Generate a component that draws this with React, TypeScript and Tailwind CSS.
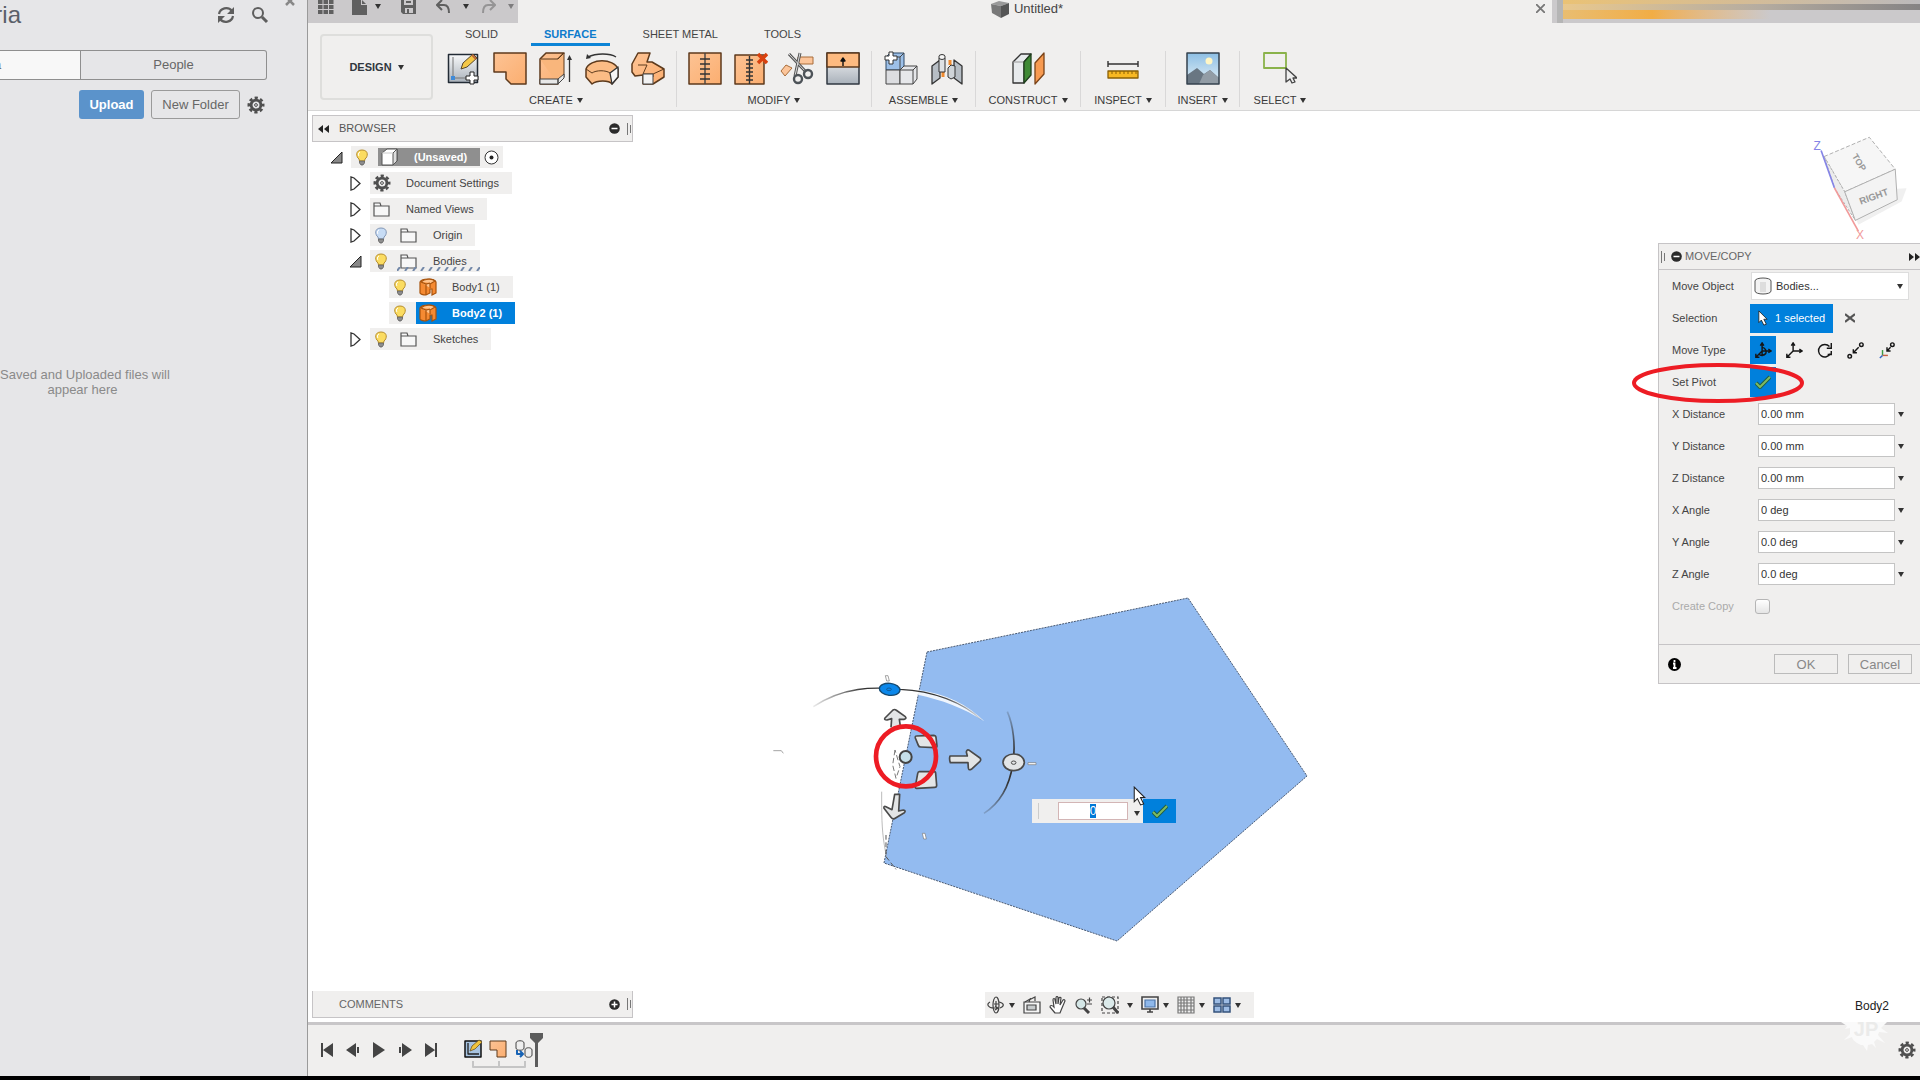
import { useEffect, useRef } from "react";
import type { ReactNode } from "react";
import { clsx } from "clsx";

const Caret = ({ className = "" }: { className?: string }) => (
  <svg viewBox="0 0 6 5" className={clsx("h-[5px] w-[6px] shrink-0 fill-[#333]", className)}>
    <path d="M0 0h6L3 5z" />
  </svg>
);

const Gear = () => (
  <svg viewBox="0 0 18 18" className="size-[18px] shrink-0" fill="none" stroke="#4f4f4f">
    <circle cx="9" cy="9" r="7.2" strokeWidth="2.6" strokeDasharray="3.2 2.455" strokeDashoffset="1.6" />
    <circle cx="9" cy="9" r="4.9" strokeWidth="2.8" />
    <circle cx="9" cy="9" r="1.4" strokeWidth="1" />
  </svg>
);

const Gradients = () => (
  <svg className="absolute size-0" aria-hidden="true">
    <defs>
      <linearGradient id="peach" x1="0" y1="0" x2="1" y2="1">
        <stop offset="0" stopColor="#fdc394" />
        <stop offset="1" stopColor="#fbae70" />
      </linearGradient>
      <linearGradient id="steel" x1="0" y1="0" x2="0" y2="1">
        <stop offset="0" stopColor="#f8f9fa" />
        <stop offset="1" stopColor="#a9b1ba" />
      </linearGradient>
      <linearGradient id="sky" x1="0" y1="0" x2="0" y2="1">
        <stop offset="0" stopColor="#8dbfe4" />
        <stop offset="1" stopColor="#e4f0f6" />
      </linearGradient>
      <linearGradient id="arcFade" x1="0" y1="0" x2="1" y2="0">
        <stop offset="0" stopColor="#333" stopOpacity="0.1" />
        <stop offset="0.3" stopColor="#333" />
        <stop offset="0.75" stopColor="#333" />
        <stop offset="1" stopColor="#333" stopOpacity="0.1" />
      </linearGradient>
      <linearGradient id="arcFadeDown" x1="0" y1="0" x2="0" y2="1">
        <stop offset="0" stopColor="#333" stopOpacity="0.2" />
        <stop offset="0.4" stopColor="#333" />
        <stop offset="0.7" stopColor="#333" />
        <stop offset="1" stopColor="#333" stopOpacity="0.2" />
      </linearGradient>
    </defs>
  </svg>
);

const ToolSvg = ({ children }: { children: ReactNode }) => (
  <svg viewBox="0 0 34 34" className="size-[34px]" strokeLinejoin="round">
    {children}
  </svg>
);

const brown = "#5d3a1c";

const SketchIcon = () => (
  <ToolSvg>
    <rect x="1.5" y="3.5" width="29" height="28" fill="url(#steel)" stroke="#222b35" strokeWidth="1.5" />
    <path d="M6 6v21h18" fill="none" stroke="#777" />
    <rect x="4" y="25" width="4" height="4" fill="#3f8ad8" />
    <path d="M14 18l2-6L26 3l4 4-10 9z" fill="#f4c746" stroke="#57462a" />
    <path d="M25 4l4 4" stroke="#b9683c" strokeWidth="2" />
    <path d="M23 21h4v4h4v4h-4v4h-4v-4h-4v-4h4z" fill="#fff" stroke="#222" />
  </ToolSvg>
);

const PatchIcon = () => (
  <ToolSvg>
    <path d="M1 2h32v31H18l-5-5v-7H1z" fill="url(#peach)" stroke={brown} strokeWidth="1.5" />
  </ToolSvg>
);

const ExtrudeIcon = () => (
  <ToolSvg>
    <path d="M1 8l6-6h18l-6 6v25H1z" fill="url(#peach)" stroke={brown} strokeWidth="1.5" />
    <path d="M1 8h18l6-6v24l-6 7" fill="#f9b67c" stroke={brown} />
    <path d="M1 28h18v5H1zM19 28l6-5v4l-6 6z" fill="#e8e8e8" stroke="#444" />
    <path d="M30.500 31V8" stroke="#333" strokeWidth="1.3" />
    <path d="M28 9h5l-2.500-5z" fill="#333" />
  </ToolSvg>
);

const RevolveIcon = () => (
  <ToolSvg>
    <path d="M3 6c8-4 22-4 28 0" fill="none" stroke="#333" strokeWidth="1.4" />
    <path d="M1 8l1-5 4 4z" fill="#333" />
    <path d="M1 18c4-11 28-11 32 0v8l-6 7c-3-4-15-4-20 0l-6-7z" fill="#fbbc85" stroke={brown} strokeWidth="1.5" />
    <path d="M1 18l6 4c4-3 14-3 18 0l8-5" fill="none" stroke={brown} />
    <path d="M25 22l8-6v10l-6 7z" fill="#f5f5f5" stroke="#333" strokeWidth="1.3" />
  </ToolSvg>
);

const SweepIcon = () => (
  <ToolSvg>
    <path d="M1 13L7 2h12l-3 9h5l12 7v8l-11 7H12v-9l-8 1-3-4z" fill="url(#peach)" stroke={brown} strokeWidth="1.5" />
    <path d="M7 14h9l-4 9h10l11-5M22 23v3" fill="none" stroke={brown} />
    <rect x="12" y="23" width="10" height="10" fill="#f2f2f2" stroke="#444" />
  </ToolSvg>
);

const StitchIcon = () => (
  <ToolSvg>
    <rect x="1" y="2" width="32" height="31" fill="url(#peach)" stroke={brown} strokeWidth="1.5" />
    <path d="M17 2v31" stroke="#444" strokeWidth="1.4" />
    <path d="M12 8h10M12 13h10M12 18h10M12 23h10M12 28h10" stroke="#333" strokeWidth="1.4" />
  </ToolSvg>
);

const UnstitchIcon = () => (
  <ToolSvg>
    <rect x="1" y="4" width="29" height="29" fill="url(#peach)" stroke={brown} strokeWidth="1.5" />
    <path d="M15.500 5v28M12 9h7M12 13h7M12 17h7M12 21h7M12 25h7M12 29h7" stroke="#333" strokeWidth="1.4" />
    <path d="M24 3l9 9m0-9l-9 9" stroke="#d9420f" strokeWidth="3.500" />
  </ToolSvg>
);

const TrimIcon = () => (
  <ToolSvg>
    <path d="M18 6h15v7H18zM1 20l5-6 6 3-7 8z" fill="#fcc59a" stroke="#a86d3b" />
    <path d="M9 3l17 18M20 2l-5 23" stroke="#555" strokeWidth="3" />
    <path d="M9 3l17 18M20 2l-5 23" stroke="#ddd" />
    <circle cx="18" cy="28" r="4" fill="none" stroke="#4d5358" strokeWidth="2.400" />
    <circle cx="28" cy="23" r="4" fill="none" stroke="#4d5358" strokeWidth="2.400" />
  </ToolSvg>
);

const ExtendIcon = () => (
  <ToolSvg>
    <rect x="1" y="2" width="32" height="31" fill="url(#steel)" stroke="#303841" strokeWidth="1.5" />
    <path d="M1 2h32v14H1z" fill="#fdba80" stroke={brown} strokeWidth="1.5" />
    <path d="M17 15V8M15 10l2-3 2 3z" stroke="#111" fill="#111" strokeWidth="1.400" />
  </ToolSvg>
);

const ComponentIcon = () => (
  <ToolSvg>
    <path d="M2 6l4-4h14v13l-4 4H2z" fill="#9dc0e8" stroke="#2c4867" />
    <path d="M2 19h14v14H2z" fill="#dcdde0" stroke="#444" />
    <path d="M16 19l4-4h13v13l-4 5H16z" fill="#e6e7ea" stroke="#444" />
    <path d="M16 19h13v14M29 19l4-4M16 6v13M2 6h14l4-4" fill="none" stroke="#444" />
    <path d="M5 1h4v4h4v4H9v4H5V9H1V5h4z" fill="#fff" stroke="#333" />
  </ToolSvg>
);

const JointIcon = () => (
  <ToolSvg>
    <path d="M2 15l8-6v18l-8 6zM24 9l8 6v18l-8-6z" fill="#b7bec5" stroke="#333" strokeWidth="1.3" />
    <path d="M13 20v6M20 14V9" stroke="#f08b2f" strokeWidth="3" />
    <path d="M9 7v14h6V7z" fill="#dfe2e5" stroke="#333" />
    <ellipse cx="12" cy="6" rx="3.200" ry="2.500" fill="#f5f5f5" stroke="#333" />
    <path d="M18 17v9l3 2 4-2V15l-4-1z" fill="#cfd4d8" stroke="#333" />
  </ToolSvg>
);

const PlaneIcon = () => (
  <ToolSvg>
    <path d="M2 11l8-8h10l-7 8v21H2z" fill="#e7eaec" stroke="#333" strokeWidth="1.3" />
    <path d="M2 11h11" stroke="#999" />
    <path d="M13 11l7-8v21l-7 8z" fill="#3f8a35" stroke="#1f3f1d" strokeWidth="1.3" />
    <path d="M24 12l9-10v21l-9 10z" fill="#f79a50" stroke="#7a4318" strokeWidth="1.3" />
  </ToolSvg>
);

const MeasureIcon = () => (
  <ToolSvg>
    <path d="M2 10v6M32 10v6M2 13h30" stroke="#333" strokeWidth="1.4" />
    <rect x="2" y="20" width="30" height="7" fill="#f8b822" stroke="#8b6005" strokeWidth="1.3" />
    <path d="M6 20v3M10 20v3M14 20v3M18 20v3M22 20v3M26 20v3M30 20v3" stroke="#8b6005" />
  </ToolSvg>
);

const PictureIcon = () => (
  <ToolSvg>
    <rect x="1" y="2" width="32" height="31" fill="url(#sky)" />
    <circle cx="23" cy="10" r="3.500" fill="#fff6c4" />
    <path d="M1 24l10-7 7 6 6-4 9 8v6H1z" fill="#697682" />
    <path d="M13 33l4-9 7-5 9 8v6z" fill="#929ca5" />
    <rect x="1" y="2" width="32" height="31" fill="none" stroke="#34424e" strokeWidth="1.5" />
  </ToolSvg>
);

const SelectIcon = () => (
  <ToolSvg>
    <rect x="1" y="2" width="22" height="15" fill="none" stroke="#8ab24a" strokeWidth="1.8" />
    <path d="M23 17v14l4-3 2 4 3-1-2-4h4z" fill="#eee" stroke="#444" strokeWidth="1.3" />
  </ToolSvg>
);

const toolGroups = [
  { label: "CREATE", width: "w-[241px]", icons: [SketchIcon, PatchIcon, ExtrudeIcon, RevolveIcon, SweepIcon] },
  { label: "MODIFY", width: "w-[195px]", icons: [StitchIcon, UnstitchIcon, TrimIcon, ExtendIcon] },
  { label: "ASSEMBLE", width: "w-[104px]", icons: [ComponentIcon, JointIcon] },
  { label: "CONSTRUCT", width: "w-[105px]", icons: [PlaneIcon] },
  { label: "INSPECT", width: "w-[85px]", icons: [MeasureIcon] },
  { label: "INSERT", width: "w-[74px]", icons: [PictureIcon] },
  { label: "SELECT", width: "w-[80px]", icons: [SelectIcon] },
];

const tabs = ["SOLID", "SURFACE", "SHEET METAL", "TOOLS"];

const DataPanel = () => (
  <aside className="w-[308px] shrink-0 overflow-hidden border-r border-[#9a9a9a] bg-[#e6e6e8] text-[13px] text-[#666]">
    <div className="flex h-[50px] items-start">
      <h1 className="flex w-[21px] justify-end pt-[2px] text-2xl leading-[26px] text-[#5a6069]">ria</h1>
      <div className="flex flex-1 justify-end gap-4 pt-[6px]">
        <button aria-label="Refresh">
          <svg viewBox="0 0 18 18" className="size-[18px]" fill="none" stroke="#5e5e5e" strokeWidth="2.2">
            <path d="M2 8c1-6 9-8 13-3M16 10c-1 6-9 8-13 3" />
            <path d="M17 1v7h-7zM1 17v-7h7z" fill="#5e5e5e" stroke="none" />
          </svg>
        </button>
        <button aria-label="Search">
          <svg viewBox="0 0 18 18" className="size-[18px]" fill="none" stroke="#5e5e5e" strokeWidth="2">
            <circle cx="7" cy="7" r="5" />
            <path d="M11 11l5 5" strokeWidth="3" />
          </svg>
        </button>
      </div>
      <button aria-label="Close panel" className="ml-4 mr-3 -mt-1">
        <svg viewBox="0 0 10 10" className="size-[10px]" stroke="#888" strokeWidth="2.5">
          <path d="M1 1l8 8M9 1L1 9" />
        </svg>
      </button>
    </div>
    <div className="mr-10 flex h-[30px] overflow-hidden rounded-r-[3px] border border-l-0 border-[#8f8f8f]">
      <button className="flex w-20 items-center bg-[#f8f8f8]">
        <span className="-ml-[6px]">a</span>
      </button>
      <button className="flex-1 border-l border-[#8f8f8f]">People</button>
    </div>
    <div className="mr-[42px] mt-[10px] flex items-center justify-end gap-[7px]">
      <button className="h-[29px] w-[65px] rounded-[3px] bg-[#5b93cb] font-bold text-white">Upload</button>
      <button className="h-[29px] w-[89px] rounded-[3px] border border-[#9a9a9a]">New Folder</button>
      <button aria-label="Settings">
        <Gear />
      </button>
    </div>
    <p className="mt-[248px] w-[165px] text-center leading-[15px] whitespace-nowrap text-[#8a8a8a]">
      Saved and Uploaded files will
      <br />
      appear here
    </p>
  </aside>
);

const TitleBar = () => (
  <div className="flex h-[23px]">
    <div className="flex w-[210px] items-start bg-[#cbc9cb] pl-[10px] text-[#606060]">
      <button aria-label="Show data panel">
        <svg viewBox="0 0 16 14" className="h-[14px] w-4" fill="currentColor">
          {[0, 5, 10].map((y) => [0, 5.5, 11].map((x) => <rect key={`${x}-${y}`} x={x} y={y} width="4.5" height="4" />))}
        </svg>
      </button>
      <button aria-label="File" className="ml-[18px] flex gap-2">
        <svg viewBox="0 0 15 15" className="size-[15px]" fill="currentColor">
          <path d="M0 0h9v5h6v10H0zM10 0l4 4h-4z" />
        </svg>
        <Caret className="mt-1" />
      </button>
      <button aria-label="Save" className="ml-5">
        <svg viewBox="0 0 15 14" className="h-[14px] w-[15px]">
          <path d="M0 0h15v14H2l-2-2z" fill="#606060" />
          <path d="M3 0h9v5H3zM4 8h8v5H4z" fill="#cbc9cb" />
          <path d="M5 1h5v2H5zM6 9h2v4H6z" fill="#606060" />
        </svg>
      </button>
      <button aria-label="Undo" className="ml-5 flex gap-3">
        <svg viewBox="0 0 15 14" className="h-[14px] w-[15px]" fill="none" stroke="#606060" strokeWidth="2">
          <path d="M6 0L1 5l5 5M1 5h7c4 0 5 3 5 8" />
        </svg>
        <Caret className="mt-1" />
      </button>
      <button aria-label="Redo" className="ml-3 flex gap-3 opacity-50">
        <svg viewBox="0 0 15 14" className="h-[14px] w-[15px]" fill="none" stroke="#606060" strokeWidth="2">
          <path d="M9 0l5 5-5 5M14 5H7c-4 0-5 3-5 8" />
        </svg>
        <Caret className="mt-1" />
      </button>
    </div>
    <div className="flex h-[18px] flex-1 items-center justify-center gap-[5px] text-[13px] text-[#444]">
      <svg viewBox="0 0 18 17" className="h-[17px] w-[18px]">
        <path d="M0 3l8-3 10 2-8 3z" fill="#999" />
        <path d="M0 3l10 2v12l-9-5z" fill="#787878" />
        <path d="M10 5l8-3v11l-8 4z" fill="#555" />
      </svg>
      Untitled*
    </div>
    <button aria-label="Close document" className="mr-[7px] flex h-[17px] items-center">
      <svg viewBox="0 0 9 9" className="size-[9px]" stroke="#777" strokeWidth="1.8">
        <path d="M0 0l9 9M9 0L0 9" />
      </svg>
    </button>
    <div className="flex w-[368px] bg-[#cbc9cb] pl-[5px]">
      <div className="w-[6px] bg-[#b5b5b5]" />
      <div className="flex flex-1 flex-col">
        <div className="h-1 bg-linear-to-r from-[#eac275] via-[#d5bc95] via-50% to-[#bcbabc]" />
        <div className="h-[6px] bg-linear-to-r from-[#e9c88d] via-[#b5aca0] via-55% to-[#858384]" />
        <div className="h-[9px] bg-linear-to-r from-[#e9bd70] via-[#f1ad45] via-25% to-[#cbc9cb] to-58%" />
      </div>
    </div>
  </div>
);

const Ribbon = () => (
  <header className="shrink-0 border-b border-[#d6d6d6] bg-[#f0efee]">
    <TitleBar />
    <div className="flex h-[87px] pl-3">
      <button className="mt-[11px] flex h-[66px] w-[113px] shrink-0 items-center justify-center gap-[6px] rounded-[4px] border-2 border-[#dededc] font-bold text-[#2f363d]">
        DESIGN
        <Caret />
      </button>
      <div className="ml-[3px]">
        <div className="flex h-[23px] gap-5 pl-4">
          {tabs.map((tab) => (
            <button
              key={tab}
              className={clsx(
                "border-b-[3px] px-[13px] pt-[3px]",
                tab === "SURFACE" ? "border-[#0c84d6] font-bold text-[#0c7bcc]" : "border-transparent text-[#444]",
              )}
            >
              {tab}
            </button>
          ))}
        </div>
        <div className="mt-[5px] flex">
          {toolGroups.map(({ label, width, icons }) => (
            <div key={label} className={clsx("h-[56px] border-r border-[#d9d8d8] last:border-0", width)}>
              <div className="flex justify-center">
                {icons.map((Icon, i) => (
                  <button key={i} aria-label={`${label} ${i + 1}`} className="flex w-[46px] justify-center">
                    <Icon />
                  </button>
                ))}
              </div>
              <button className="mt-[7px] flex w-full items-center justify-center gap-1 leading-4 text-[#3a3a3a]">
                {label}
                <Caret />
              </button>
            </div>
          ))}
        </div>
      </div>
    </div>
  </header>
);

const PanelHandle = () => (
  <div className="flex h-3 items-center gap-[2px]">
    <i className="h-3 w-px bg-[#777]" />
    <i className="h-2 w-px bg-[#777]" />
  </div>
);

const RoundSign = ({ plus }: { plus?: boolean }) => (
  <svg viewBox="0 0 11 11" className="size-[11px]">
    <circle cx="5.500" cy="5.500" r="5.300" fill="#2b2b2b" />
    <path d={plus ? "M2.500 5.500h6M5.500 2.500v6" : "M2.500 5.500h6"} stroke="#fff" strokeWidth="1.5" />
  </svg>
);

const Bulb = ({ off }: { off?: boolean }) => (
  <span className="flex w-[27px] shrink-0 pl-1">
    <svg viewBox="0 0 14 17" className="h-[17px] w-[14px]">
      <path d="M7 1c-7 0-6 7-3 9l.5 2h5l.5-2c3-2 4-9-3-9z" fill={off ? "#c7dcf5" : "#fbdc61"} stroke={off ? "#8296b5" : "#b68d2c"} />
      <path d="M5 3c-2 1-2 3-1 4" fill="none" stroke="#fff" />
      <path d="M4.500 12h5v2l-1.500 2h-2l-1.500-2z" fill="#8d8d8d" stroke="#555" strokeWidth=".7" />
    </svg>
  </span>
);

const TreeIcon = ({ kind }: { kind: string }) => (
  <span className="flex w-9 shrink-0 pl-[3px]">
    {kind === "gear" && <Gear />}
    {kind === "folder" && (
      <svg viewBox="0 0 17 15" className="h-[15px] w-[17px]" fill="#f7f7f7" stroke="#555" strokeWidth="1.200">
        <path d="M1 14V1h6l1 3h8v10zM1 4h7" />
      </svg>
    )}
    {kind === "body" && (
      <svg viewBox="0 0 18 18" className="size-[18px]" stroke="#a8530c" strokeWidth="1.200">
        <path d="M1 4c2-4 14-4 16 0v11l-4 2v-6h-2v4l-4 2c-3 0-6-1-6-2z" fill="#f58a32" />
        <path d="M2 4c3-3 11-4 14-1l-5 3v4M2 4l5 2 4-1M7 6v11" fill="#ffc48c" />
      </svg>
    )}
    {kind === "cube" && (
      <svg viewBox="0 0 17 18" className="h-[18px] w-[17px]" stroke="#555" fill="#fff">
        <path d="M1 5l5-4h10v12l-4 4H1z" />
        <path d="M12 5l4-4v12l-4 4z" fill="#ddd" />
        <path d="M1 5h11" stroke="#ccc" />
      </svg>
    )}
  </span>
);

type Node = { label: string; indent: string; icon: string; bulb?: "on" | "off"; arrow?: "open" | "closed" };

const nodes: Node[] = [
  { label: "(Unsaved)", indent: "pl-[18px]", icon: "cube", bulb: "on", arrow: "open" },
  { label: "Document Settings", indent: "pl-[37px]", icon: "gear", arrow: "closed" },
  { label: "Named Views", indent: "pl-[37px]", icon: "folder", arrow: "closed" },
  { label: "Origin", indent: "pl-[37px]", icon: "folder", bulb: "off", arrow: "closed" },
  { label: "Bodies", indent: "pl-[37px]", icon: "folder", bulb: "on", arrow: "open" },
  { label: "Body1 (1)", indent: "pl-[56px]", icon: "body", bulb: "on" },
  { label: "Body2 (1)", indent: "pl-[56px]", icon: "body", bulb: "on" },
  { label: "Sketches", indent: "pl-[37px]", icon: "folder", bulb: "on", arrow: "closed" },
];

const Browser = () => (
  <section className="w-[321px]">
    <div className="flex h-[27px] items-center border border-[#c6c4c6] bg-[#f0efee] pr-px text-[#555]">
      <button aria-label="Collapse browser" className="w-[26px] pl-[5px]">
        <svg viewBox="0 0 11 8" className="h-2 w-[11px] fill-[#222]">
          <path d="M5 0v8L0 4zM11 0v8L6 4z" />
        </svg>
      </button>
      <h2 className="flex-1">BROWSER</h2>
      <button aria-label="Minimize browser" className="mr-[7px]">
        <RoundSign />
      </button>
      <PanelHandle />
    </div>
    <ul className="mt-[2px] text-[#444]">
      {nodes.map(({ label, indent, icon, bulb, arrow }) => {
        const root = icon === "cube";
        const selected = label.startsWith("Body2");
        return (
          <li key={label} className={clsx("flex h-[26px] items-center", indent)}>
            <span className="flex w-[21px] shrink-0">
              {arrow === "open" && (
                <svg viewBox="0 0 13 13" className="size-[13px]">
                  <path d="M12 1v11H1z" fill="#888" stroke="#222" />
                </svg>
              )}
              {arrow === "closed" && (
                <svg viewBox="0 0 11 15" className="ml-px h-[15px] w-[11px]">
                  <path d="M1 1v13l3-1 6-5.500L4 2z" fill="#fff" stroke="#333" strokeWidth="1.300" />
                </svg>
              )}
            </span>
            <div className="flex h-[22px] items-center bg-[#f0efee]">
              {bulb && <Bulb off={bulb === "off"} />}
              <span
                className={clsx(
                  "relative flex items-center pr-[13px]",
                  root && "h-[18px] bg-[#8f8f8f] font-bold text-white",
                  selected && "h-[22px] bg-[#0080dc] font-bold text-white",
                )}
              >
                <TreeIcon kind={icon} />
                {label}
                {label === "Bodies" && (
                  <svg viewBox="0 0 83 4" className="absolute bottom-[-2px] left-0 h-1 w-[83px]" stroke="#7388a8" strokeWidth="2">
                    <path d="M0 4l3-4M8 4l3-4M16 4l3-4M24 4l3-4M32 4l3-4M40 4l3-4M48 4l3-4M56 4l3-4M64 4l3-4M72 4l3-4M80 4l3-4" />
                  </svg>
                )}
              </span>
              {root && (
                <svg viewBox="0 0 15 15" className="mx-1 size-[15px]">
                  <circle cx="7.500" cy="7.500" r="6.500" fill="#fff" stroke="#333" />
                  <circle cx="7.500" cy="7.500" r="2" fill="#222" />
                </svg>
              )}
            </div>
          </li>
        );
      })}
    </ul>
  </section>
);

const Model = () => (
  <svg className="absolute inset-0 size-full" strokeLinejoin="round">
    <g transform="translate(-308 -111)">
      <path d="M927 652L1188 598 1307 776 1117 941 884 863z" fill="#93bbf0" stroke="#4a5a72" strokeDasharray="2 1" />
    </g>
    <g transform="translate(472 529) scale(.33333)">
      <path d="M305 455c0 70 0 110 8 160l7 40" fill="none" stroke="#999" strokeWidth="2" />
      <path d="M345 330l-7 45 10 40 12-35z" fill="none" stroke="#777" strokeWidth="3" strokeDasharray="16 8" />
      <path d="M318 585v65l30 38" fill="none" stroke="#555" strokeWidth="3" strokeDasharray="14 8" />
      <path d="M415 150c80 10 150 45 198 94-60-40-130-65-200-80z" fill="#fff" opacity=".85" />
      <path d="M100 200c90-60 180-60 260-52 100 4 190 40 245 92" fill="none" stroke="url(#arcFade)" strokeWidth="4" />
      <path d="M682 215c35 80 32 240-70 305" fill="none" stroke="url(#arcFadeDown)" strokeWidth="5" />
      <g fill="#e3e5e6" stroke="#4a4a4a" strokeWidth="5">
        <path d="M333 262l2-26-14 4q-10 0-6-6l24-24q5-3 9 0l28 20q5 6-4 8l-14 0 4 28" />
        <path d="M344 463h15l-3 50 14-3q9 2 3 8l-30 18q-6 2-9-3l-22-28q-2-8 6-5l18 9z" />
        <path d="M510 348h52l-3-12q2-9 9-5l32 23q4 5 0 10l-26 24q-8 4-9-4l-1-16h-53q-4-10-1-20z" />
        <path d="M409 288l52-2q6 0 7 6l3 26q0 5-6 5l-43-2q-5 0-7-5l-9-22q-1-6 3-6zM418 395h44q5 0 5 5l3 36q0 6-6 6l-54 3q-5 0-4-6l7-38q1-6 5-6z" />
        <ellipse cx="701" cy="367" rx="32" ry="25" />
        <ellipse cx="701" cy="368" rx="7" ry="5" strokeWidth="3" />
      </g>
      <ellipse cx="329" cy="148" rx="31" ry="18" fill="#0b87ea" stroke="#16496f" strokeWidth="4" transform="rotate(6 329 148)" />
      <ellipse cx="327" cy="148" rx="7" ry="4" fill="none" stroke="#16496f" strokeWidth="2" />
      <circle cx="377" cy="351" r="18" fill="#c6e0ea" stroke="#444" strokeWidth="6" />
      <path d="M316 107h8l4 16h-8zM744 368h24v6h-24zM427 580h8l4 17h-8zM-20 332h24l6 8" fill="#fff" stroke="#777" strokeWidth="2" />
      <circle cx="378" cy="349" r="90" fill="none" stroke="#ed1c24" strokeWidth="14" />
    </g>
  </svg>
);

const ViewCube = () => (
  <svg viewBox="0 3 360 400" className="absolute right-0 top-0 h-[133px] w-[120px]">
    <g transform="translate(-540 0)" fontFamily="Liberation Sans, Arial, sans-serif">
      <path d="M675 245l40 100 130-70 15-40z" fill="#f0f0f0" />
      <path d="M612 140L748 82 826 178 674 246z" fill="#f6f6f6" stroke="#b0b0b0" strokeWidth="3" strokeDasharray="12 6" />
      <path d="M612 140l62 106 32 86-62-96z" fill="#ececec" stroke="#b0b0b0" strokeWidth="3" strokeDasharray="8 5" />
      <path d="M674 246l152-68 6 92-126 62z" fill="#f3f3f3" stroke="#b0b0b0" strokeWidth="3" />
      <path d="M603 122l40 112" stroke="#8584e6" strokeWidth="5" />
      <path d="M643 234l72 130" stroke="#f19a9a" strokeWidth="5" />
      <text x="580" y="119" fontSize="36" fill="#8584e6">Z</text>
      <text x="708" y="388" fontSize="36" fill="#f19a9a">X</text>
      <text x="718" y="167" fontSize="27" fontWeight="bold" fill="#999" textAnchor="middle" transform="rotate(58 718 157)">TOP</text>
      <text x="762" y="270" fontSize="29" fontWeight="bold" fill="#999" textAnchor="middle" transform="rotate(-20 762 262)">RIGHT</text>
    </g>
  </svg>
);

const CheckMark = () => (
  <svg viewBox="0 0 16 14" className="pointer-events-none h-[14px] w-4" fill="none">
    <path d="M1 8l4 4L15 2" stroke="#1e5c45" strokeWidth="4" />
    <path d="M1 8l4 4L15 2" stroke="#7dbb62" strokeWidth="2" />
  </svg>
);

const PointerIcon = ({ className }: { className: string }) => (
  <svg viewBox="0 0 12 19" className={className}>
    <path d="M1 1v14l3-3 3 6 3-1-3-6h4z" fill="#fff" stroke="#222" />
  </svg>
);

const ValueInput = () => {
  const ref = useRef<HTMLInputElement>(null);

  useEffect(() => {
    ref.current?.focus({ preventScroll: true });
    ref.current?.select();
  }, []);

  return (
    <div className="absolute left-[724px] top-[688px] flex h-6 w-36 items-center bg-[#f0efee]">
      <i className="ml-[6px] h-4 w-px bg-[#ccc]" />
      <input
        ref={ref}
        aria-label="Value"
        defaultValue="0"
        className="ml-[19px] h-[18px] w-[70px] border border-[#d3b5b5] bg-white text-center text-xs outline-none selection:bg-[#0078d7] selection:text-white"
      />
      <Caret className="ml-[6px] mt-1" />
      <button aria-label="Accept value" className="ml-auto flex h-6 w-[33px] items-center justify-center bg-[#0080dc]">
        <CheckMark />
      </button>
      <PointerIcon className="absolute -top-[13px] left-[101px] h-[20px] w-[13px]" />
    </div>
  );
};

const moveTypes = [
  { name: "Free move", art: <path d="M9 16V2M9 10h9M9 10l-7 7M9 6a5 5 0 0 1 4 7 6 6 0 0 1-7 1M7 4l2-3 2 3M16 8l3 2-3 2M2 13v4h4" /> },
  { name: "Translate", art: <path d="M9 10V2M9 10h9M9 10l-7 7M7 4l2-3 2 3M16 8l3 2-3 2M2 13v4h4" /> },
  { name: "Rotate", art: <path d="M15 5a7 7 0 1 0 1 8M17 1v6h-5M17 10v4h-4" /> },
  { name: "Point to point", art: <path d="M14 3a2 2 0 1 0 4 0 2 2 0 1 0-4 0M1 16a2 2 0 1 0 4 0 2 2 0 1 0-4 0M13 6l-6 6M7 8v4h4" /> },
  {
    name: "Point to position",
    art: (
      <>
        <path d="M14 3a2 2 0 1 0 4 0 2 2 0 1 0-4 0M14 6l-4 4M10 6v4h4" />
        <path d="M5 15V9" stroke="#3c9b45" />
        <path d="M5 15h6" stroke="#c76245" />
        <path d="M5 15l-3 3" stroke="#3466c7" />
      </>
    ),
  },
];

const fields = [
  ["X Distance", "0.00 mm"],
  ["Y Distance", "0.00 mm"],
  ["Z Distance", "0.00 mm"],
  ["X Angle", "0 deg"],
  ["Y Angle", "0.0 deg"],
  ["Z Angle", "0.0 deg"],
];

const MovePanel = () => (
  <section className="absolute right-0 top-[132px] w-[262px] border border-r-0 border-[#c6c4c6] bg-[#f0efee] text-[#444]">
    <div className="flex h-[26px] items-center border-b border-[#c6c4c6] pl-[2px] text-[#666]">
      <PanelHandle />
      <button aria-label="Minimize panel" className="ml-[6px] mr-[3px]">
        <RoundSign />
      </button>
      <h2 className="flex-1">MOVE/COPY</h2>
      <svg viewBox="0 0 11 8" className="h-2 w-[11px] fill-[#222]">
        <path d="M0 0v8l5-4zM6 0v8l5-4z" />
      </svg>
    </div>
    <form className="pb-[22px] pl-[13px]">
      <div className="flex h-8 items-center">
        <label htmlFor="object" className="w-[79px]">Move Object</label>
        <div className="relative flex h-7 w-[158px] items-center border border-[#ddd] bg-white">
          <svg viewBox="0 0 18 18" className="ml-[2px] size-[18px]" fill="#f3f3f3" stroke="#555">
            <path d="M1 4c0-4 16-4 16 0v10c0 4-16 4-16 0z" />
            <path d="M6 5h6v10H6z" fill="#ddd" stroke="none" />
          </svg>
          <select id="object" className="absolute inset-0 appearance-none pl-6 text-[#333] outline-none">
            <option>Bodies...</option>
          </select>
          <Caret className="ml-auto mr-[5px]" />
        </div>
      </div>
      <div className="flex h-8 items-center">
        <span className="w-[78px]">Selection</span>
        <button type="button" className="flex h-[29px] w-[83px] items-center gap-[7px] bg-[#0080dc] pl-2 text-white">
          <PointerIcon className="h-4 w-[10px]" />1 selected
        </button>
        <button type="button" aria-label="Clear selection" className="ml-3">
          <svg viewBox="0 0 10 10" className="size-[10px]" stroke="#555" strokeWidth="2.200">
            <path d="M0 1l10 8M10 1L0 9" />
          </svg>
        </button>
      </div>
      <div className="flex h-8 items-center">
        <span className="w-[78px]">Move Type</span>
        <div className="flex gap-[5px]">
          {moveTypes.map(({ name, art }, i) => (
            <button
              type="button"
              key={name}
              aria-label={name}
              className={clsx("flex h-7 w-[26px] items-center justify-center", i === 0 && "bg-[#0080dc]")}
            >
              <svg viewBox="0 0 20 19" className="h-[17px] w-[18px]" fill="none" stroke="#151515" strokeWidth="1.600">
                {art}
              </svg>
            </button>
          ))}
        </div>
      </div>
      <div className="flex h-8 items-center">
        <label htmlFor="pivot" className="w-[78px]">Set Pivot</label>
        <span className="relative flex h-[30px] w-[26px] items-center justify-center bg-[#0080dc]">
          <input id="pivot" type="checkbox" defaultChecked className="absolute inset-0 appearance-none" />
          <CheckMark />
        </span>
      </div>
      {fields.map(([label, value]) => (
        <div key={label} className="flex h-8 items-center">
          <label htmlFor={label} className="w-[86px]">{label}</label>
          <input id={label} defaultValue={value} className="h-[22px] w-[137px] border border-[#c4c4c4] bg-white pl-[2px] text-[#333]" />
          <Caret className="ml-[3px]" />
        </div>
      ))}
      <div className="flex h-8 items-center text-[#aaa]">
        <label htmlFor="copy" className="w-[83px]">Create Copy</label>
        <input id="copy" type="checkbox" disabled className="size-[15px] appearance-none rounded-[3px] border border-[#b5b5b5] bg-linear-to-b from-white to-[#e5e5e5]" />
      </div>
    </form>
    <div className="flex h-[39px] items-center gap-[10px] border-t border-[#c6c4c6] pl-[9px] pr-2 text-[13px] text-[#888]">
      <svg viewBox="0 0 13 13" className="mr-auto size-[13px]">
        <circle cx="6.500" cy="6.500" r="6.500" fill="#000" />
        <path d="M6.500 2v2M5 5.500h1.500v4M5 10h3.500" stroke="#fff" strokeWidth="1.800" fill="none" />
      </svg>
      <button className="h-5 w-16 border border-[#bbb]">OK</button>
      <button className="h-5 w-16 border border-[#bbb]">Cancel</button>
    </div>
    <svg viewBox="0 0 176 44" className="pointer-events-none absolute -left-7 top-[117px] h-11 w-[176px]">
      <ellipse cx="87" cy="22" rx="84" ry="18" fill="none" stroke="#ed1c24" strokeWidth="4" />
    </svg>
  </section>
);

const NavSvg = ({ children }: { children: ReactNode }) => (
  <svg viewBox="0 0 18 18" className="size-[18px]" fill="none" stroke="#444" strokeWidth="1.200">
    {children}
  </svg>
);

const navTools = [
  {
    name: "Orbit",
    caret: "ml-1",
    art: (
      <>
        <ellipse cx="9" cy="9" rx="3" ry="8" />
        <path d="M3 6c-4 2-2 6 4 6h3M12 6c5 1 6 4 1 6M8 10l3 2-3 2M9 5v5M7 8h5" />
      </>
    ),
  },
  {
    name: "Look at",
    art: (
      <>
        <path d="M1 6h16v11H1z" fill="#f5f5f5" />
        <path d="M4 9h9v5H4z" fill="#c7cbcc" />
        <path d="M2 6l5-3-1 3M6 4l6-3v4" />
      </>
    ),
  },
  { name: "Pan", art: <path d="M6 17l-5-6c0-2 2-2 4 0L4 4c0-2 2-2 2 0l1 4V2c0-2 2-2 2 0v6l1-6c0-1 2-1 2 0l-1 7 3-5c1-1 2 0 2 1l-3 7-2 5z" fill="#fff" /> },
  {
    name: "Zoom",
    art: (
      <>
        <circle cx="6" cy="8" r="5" fill="#d4e6e6" />
        <path d="M9 12l5 5" strokeWidth="3" />
        <path d="M12 4h5M14.500 1.500v5M12 8h5" />
      </>
    ),
  },
  {
    name: "Fit",
    caret: "ml-2",
    art: (
      <>
        <path d="M1 1h16v16H1z" strokeDasharray="3 2" />
        <circle cx="8" cy="7" r="6" fill="#dbeaea" />
        <path d="M12 11l5 6" strokeWidth="3" />
      </>
    ),
  },
  {
    name: "Display settings",
    caret: "ml-1",
    art: (
      <>
        <path d="M1 1h16v12H1zM6 16h6M9 13v3" fill="#eee" strokeWidth="1.600" />
        <path d="M4 4h10v7H4z" fill="#8fb8ea" stroke="#4c74a8" />
      </>
    ),
  },
  { name: "Grid settings", caret: "ml-1", art: <path d="M1 1h16v16H1zM4 1v16M7 1v16M10 1v16M14 1v16M1 4h16M1 7h16M1 10h16M1 14h16" stroke="#777" fill="#eee" /> },
  { name: "Viewports", caret: "ml-1", art: <path d="M1 2h7v6H1zM10 2h7v6h-7zM1 10h7v6H1zM10 10h7v6h-7z" fill="#9dbce4" stroke="#35537c" strokeWidth="1.500" /> },
];

const BottomRow = () => (
  <div className="grid grid-cols-[1fr_auto_1fr] items-end pb-1">
    <div className="flex h-[27px] w-[321px] items-center border border-t-0 border-[#c6c4c6] bg-[#f0efee] pl-[26px] pr-px text-[#666]">
      <h2 className="flex-1">COMMENTS</h2>
      <button aria-label="Add comment" className="mr-[7px]">
        <RoundSign plus />
      </button>
      <PanelHandle />
    </div>
    <nav className="ml-[6px] flex h-[26px] w-[269px] items-center justify-between bg-[#f0efee] pl-[2px] pr-3">
      {navTools.map(({ name, caret, art }) => (
        <button key={name} aria-label={name} className="flex items-center">
          <NavSvg>{art}</NavSvg>
          {caret && <Caret className={caret} />}
        </button>
      ))}
    </nav>
    <p className="pr-[31px] text-right text-xs leading-6 text-[#222]">Body2</p>
  </div>
);

const playback = [
  { name: "To start", d: "M1 1h2v14H1zM13 1v14L3 8z" },
  { name: "Step back", d: "M0 8l10-7v14zM11 5h2v6h-2z" },
  { name: "Play", d: "M1 0v16l12-8z" },
  { name: "Step forward", d: "M1 5h2v6H1zM4 1v14l10-7z" },
  { name: "To end", d: "M1 1v14l10-7zM11 1h2v14h-2z" },
];

const Timeline = () => (
  <footer className="relative flex h-[54px] shrink-0 items-center border-t-[3px] border-[#c8c6c8] bg-[#f0efee] pb-px pl-3 pr-1">
    <div className="flex gap-3">
      {playback.map(({ name, d }) => (
        <button key={name} aria-label={name}>
          <svg viewBox="0 0 14 16" className="h-4 w-[14px] fill-[#444]">
            <path d={d} />
          </svg>
        </button>
      ))}
    </div>
    <svg viewBox="0 0 82 36" className="ml-[25px] h-9 w-[82px]" strokeLinejoin="round">
      <rect x="2" y="9" width="16" height="16" fill="#a7c3e0" stroke="#111" strokeWidth="1.500" />
      <path d="M5 11v11h11" fill="none" stroke="#222" strokeWidth="1.300" />
      <path d="M7 19l2-5 7-6 3 2-7 7z" fill="#f1c43c" stroke="#6f5521" strokeWidth=".8" />
      <path d="M27 9h16v16h-9v-7h-7z" fill="url(#peach)" stroke={brown} />
      <path d="M53 11c0-3 8-3 8 0v5c0 3-8 3-8 0zM62 18c0-3 7-3 7 0v5c0 3-7 3-7 0z" fill="#eee" stroke="#444" />
      <path d="M54 18v4h5M57 19l3 3-3 3" fill="none" stroke="#1763b5" strokeWidth="2" />
      <path d="M10 29v6h52v-6M36 29v6" fill="none" stroke="#c5c5c5" strokeWidth="2" />
      <path d="M67 1h13v5l-5 5v24h-3V11l-5-5z" fill="#5c5c5c" />
    </svg>
    <button aria-label="Timeline settings" className="ml-auto">
      <Gear />
    </button>
    <svg viewBox="0 0 50 28" className="pointer-events-none absolute -top-[3px] right-[29px] h-7 w-[50px] overflow-visible" fill="#fafafa">
      <path d="M0 0l6 4-2 3 5-1v6l-6 6 8-3c1 4 5 6 9 8l2 0 4 6 1-6 4-1 4 4-2-6 3-3 8 4-7-8 1-3 9 1-7-5 6-6z" />
      <text x="25" y="14" textAnchor="middle" fontSize="20" fontWeight="bold" fill="#ebebea">JP</text>
    </svg>
  </footer>
);

const App = () => (
  <div className="flex h-screen flex-col overflow-hidden bg-white font-['Liberation_Sans',Arial,sans-serif] text-[11px]">
    <Gradients />
    <div className="flex min-h-0 flex-1">
      <DataPanel />
      <div className="flex min-w-0 flex-1 flex-col">
        <Ribbon />
        <main className="relative flex min-h-0 flex-1 flex-col bg-white">
          <Model />
          <ViewCube />
          <div className="relative flex flex-1 flex-col justify-between pl-1 pt-1">
            <Browser />
            <BottomRow />
          </div>
          <ValueInput />
          <MovePanel />
        </main>
        <Timeline />
      </div>
    </div>
    <div className="h-1 shrink-0 bg-black pl-[90px]">
      <div className="h-1 w-[50px] bg-[#333]" />
    </div>
  </div>
);

export default App;
